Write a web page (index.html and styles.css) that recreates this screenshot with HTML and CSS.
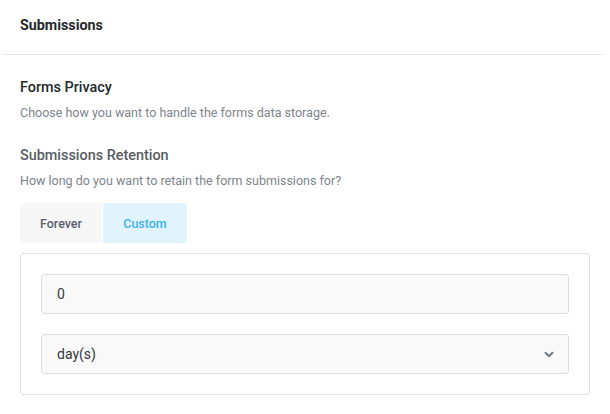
FILE: index.html
```html
<!DOCTYPE html>
<html>
<head>
<meta charset="utf-8">
<link rel="stylesheet" href="styles.css">
</head>
<body>
<div class="panel">
  <div class="panel-header">
    <h1 class="panel-title">Submissions</h1>
  </div>
  <div class="panel-body">
    <div class="section first">
      <h2 class="section-title dark">Forms Privacy</h2>
      <p class="section-desc">Choose how you want to handle the forms data storage.</p>
    </div>
    <div class="section">
      <h2 class="section-title">Submissions Retention</h2>
      <p class="section-desc">How long do you want to retain the form submissions for?</p>
    </div>
    <div class="tabs">
      <button class="tab">Forever</button>
      <button class="tab active">Custom</button>
    </div>
    <div class="box">
      <div class="field">0</div>
      <div class="field select">
        <span>day(s)</span>
        <svg class="chevron" width="10" height="7" viewBox="0 0 10 7"><path d="M1 1.2 L5 5.2 L9 1.2" fill="none" stroke="#6d7882" stroke-width="2"/></svg>
      </div>
    </div>
  </div>
</div>
</body>
</html>
```
FILE: styles.css
```css
* { box-sizing: border-box; }
body {
  margin: 0;
  background: #fff;
  font-family: Roboto, "Noto Sans", sans-serif;
  color: #23282d;
}
.panel-header {
  margin: 0 7px 0 3px;
  padding: 0 17px;
  height: 55px;
  border-bottom: 1px solid #e5e5e5;
  display: flex;
  align-items: center;
}
.panel-title {
  margin: 0 0 4px 0;
  font-size: 14.3px;
  font-weight: 700;
  color: #23282d;
}
.panel-body {
  padding: 23px 20px 0 20px;
}
.section { margin-bottom: 13px; }
.section.first { margin-bottom: 24px; }
.section-title {
  margin: 0;
  font-size: 14.4px;
  font-weight: 500;
  line-height: 20px;
  color: #555d66;
}
.section-title.dark { color: #23282d; }
.section-desc {
  margin: 6px 0 0 0;
  font-size: 12.5px;
  line-height: 18px;
  color: #7b848d;
}
.tabs {
  display: flex;
  gap: 1px;
  width: 167px;
}
.tab {
  border: 0;
  height: 40px;
  font-family: inherit;
  font-size: 12.5px;
  font-weight: 500;
  background: #f7f7f7;
  color: #59616a;
  padding: 0;
}
.tab:first-child { width: 82px; border-radius: 4px 0 0 4px; }
.tab.active { width: 84px; background: #e1f4fd; color: #3ab2e8; border-radius: 0 4px 4px 0; }
.box {
  margin-top: 10px;
  width: 570px;
  border: 1px solid #e2e2e2;
  border-radius: 3px;
  padding: 20px;
  display: flex;
  flex-direction: column;
  gap: 20px;
}
.field {
  height: 40px;
  border: 1px solid #dddddd;
  border-radius: 3px;
  background: #f9f9f9;
  padding: 0 14px 0 15px;
  display: flex;
  align-items: center;
  font-size: 14px;
  color: #32373c;
}
.select { justify-content: space-between; }
.chevron { margin-top: 1px; }
```
